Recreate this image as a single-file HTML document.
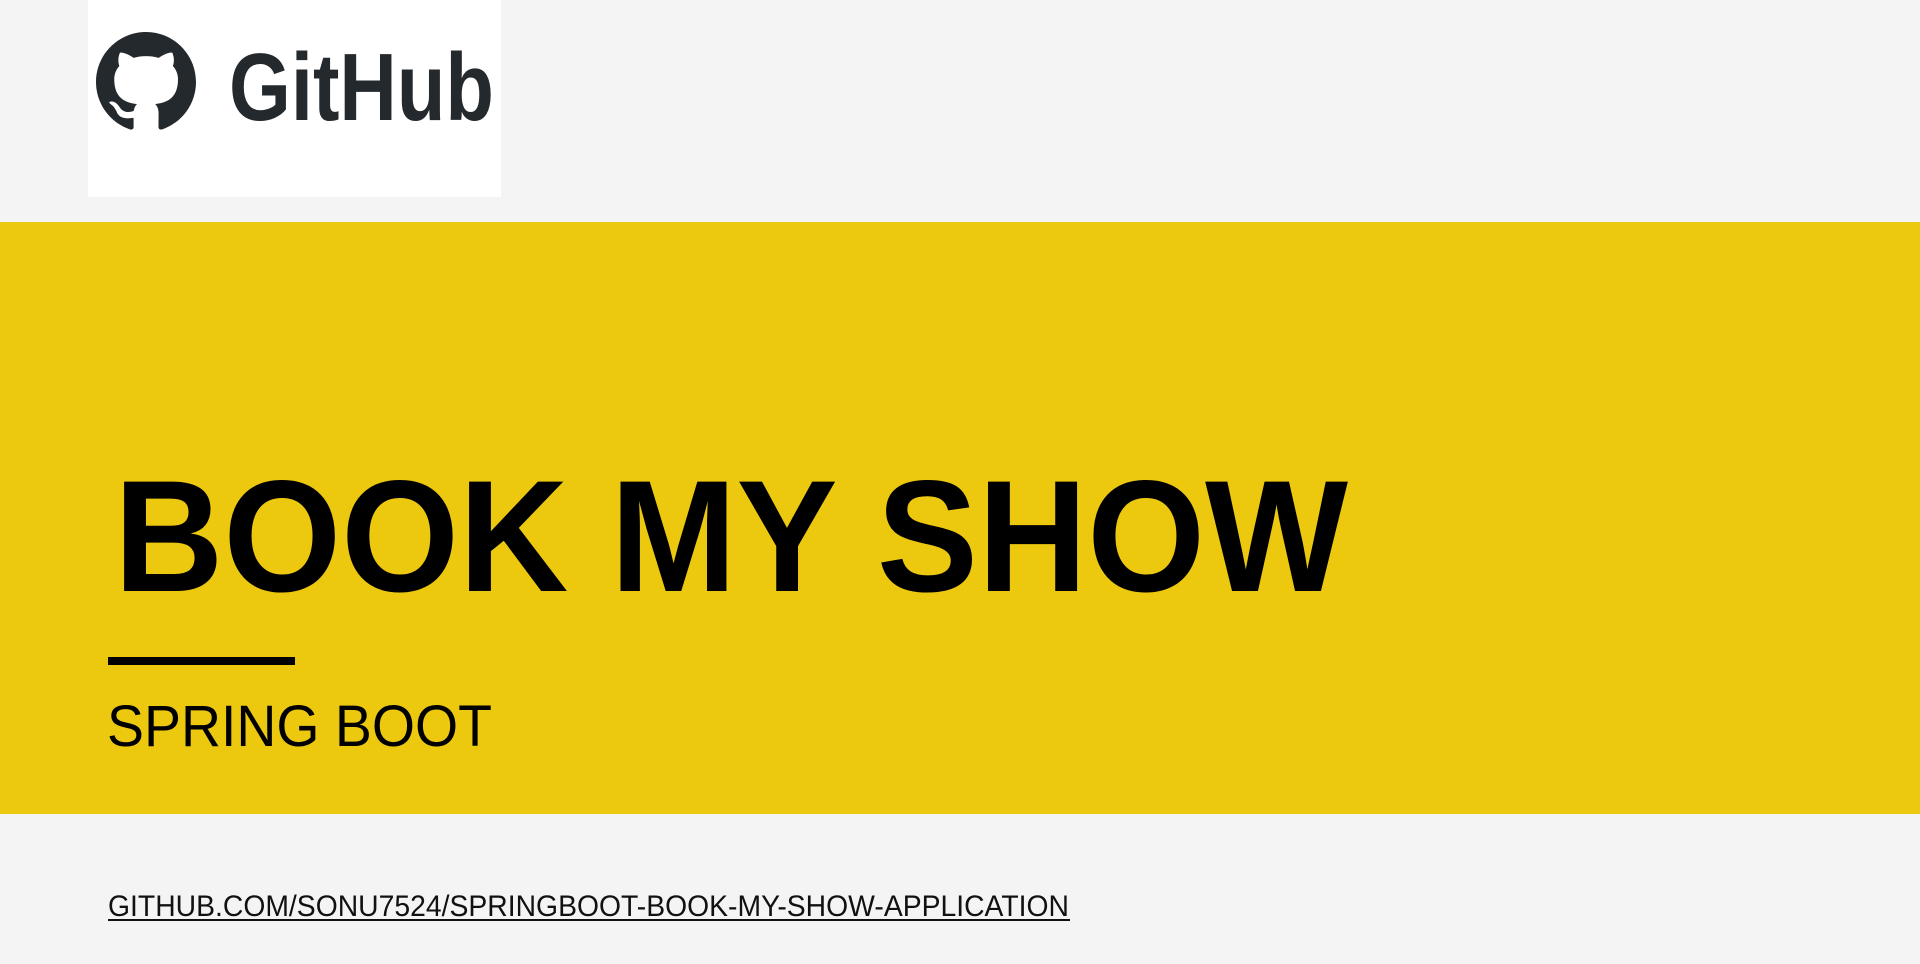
<!DOCTYPE html>
<html><head><meta charset="utf-8"><style>
html,body{margin:0;padding:0;background:#f4f4f4;width:1920px;height:964px;overflow:hidden}
svg{display:block}
text{font-family:"Liberation Sans",sans-serif}
</style></head><body>
<svg width="1920" height="964" viewBox="0 0 1920 964" xmlns="http://www.w3.org/2000/svg">
<rect width="1920" height="964" fill="#f4f4f4"/>
<rect x="88" y="0" width="413" height="197" fill="#ffffff"/>
<g transform="translate(96,32) scale(6.25)" fill="#24292e">
<path d="M8 0C3.58 0 0 3.58 0 8c0 3.54 2.290 6.530 5.470 7.590.4.07.55-.17.55-.38 0-.19-.01-.82-.01-1.49-2.010.37-2.530-.49-2.690-.94-.09-.23-.48-.94-.82-1.130-.28-.15-.68-.52-.01-.53.63-.01 1.080.58 1.230.82.72 1.210 1.870.87 2.330.66.07-.52.28-.87.51-1.070-1.780-.2-3.640-.89-3.640-3.950 0-.87.31-1.590.82-2.150-.08-.2-.36-1.020.08-2.120 0 0 .67-.21 2.200.82.64-.18 1.320-.27 2-.27.68 0 1.360.09 2 .27 1.530-1.040 2.200-.82 2.200-.82.44 1.100.16 1.920.08 2.120.51.56.82 1.270.82 2.150 0 3.070-1.870 3.750-3.650 3.950.29.25.54.73.54 1.480 0 1.070-.01 1.930-.01 2.200 0 .21.15.46.55.38A8.013 8.013 0 0016 8c0-4.420-3.580-8-8-8z"/>
</g>
<text x="229" y="120" font-size="96" font-weight="bold" fill="#24292e" textLength="265" lengthAdjust="spacingAndGlyphs">GitHub</text>
<rect x="0" y="222" width="1920" height="592" fill="#ecc80f"/>
<text x="114" y="591" font-size="159" font-weight="bold" fill="#000" textLength="1234" lengthAdjust="spacingAndGlyphs">BOOK MY SHOW</text>
<rect x="108" y="657" width="187" height="8" fill="#000"/>
<text x="107" y="746" font-size="58" fill="#000" textLength="385" lengthAdjust="spacingAndGlyphs">SPRING BOOT</text>
<text x="108" y="916" font-size="30" fill="#111" textLength="961" lengthAdjust="spacingAndGlyphs">GITHUB.COM/SONU7524/SPRINGBOOT-BOOK-MY-SHOW-APPLICATION</text>
<rect x="108" y="919" width="962" height="2" fill="#111"/>
</svg>
</body></html>
